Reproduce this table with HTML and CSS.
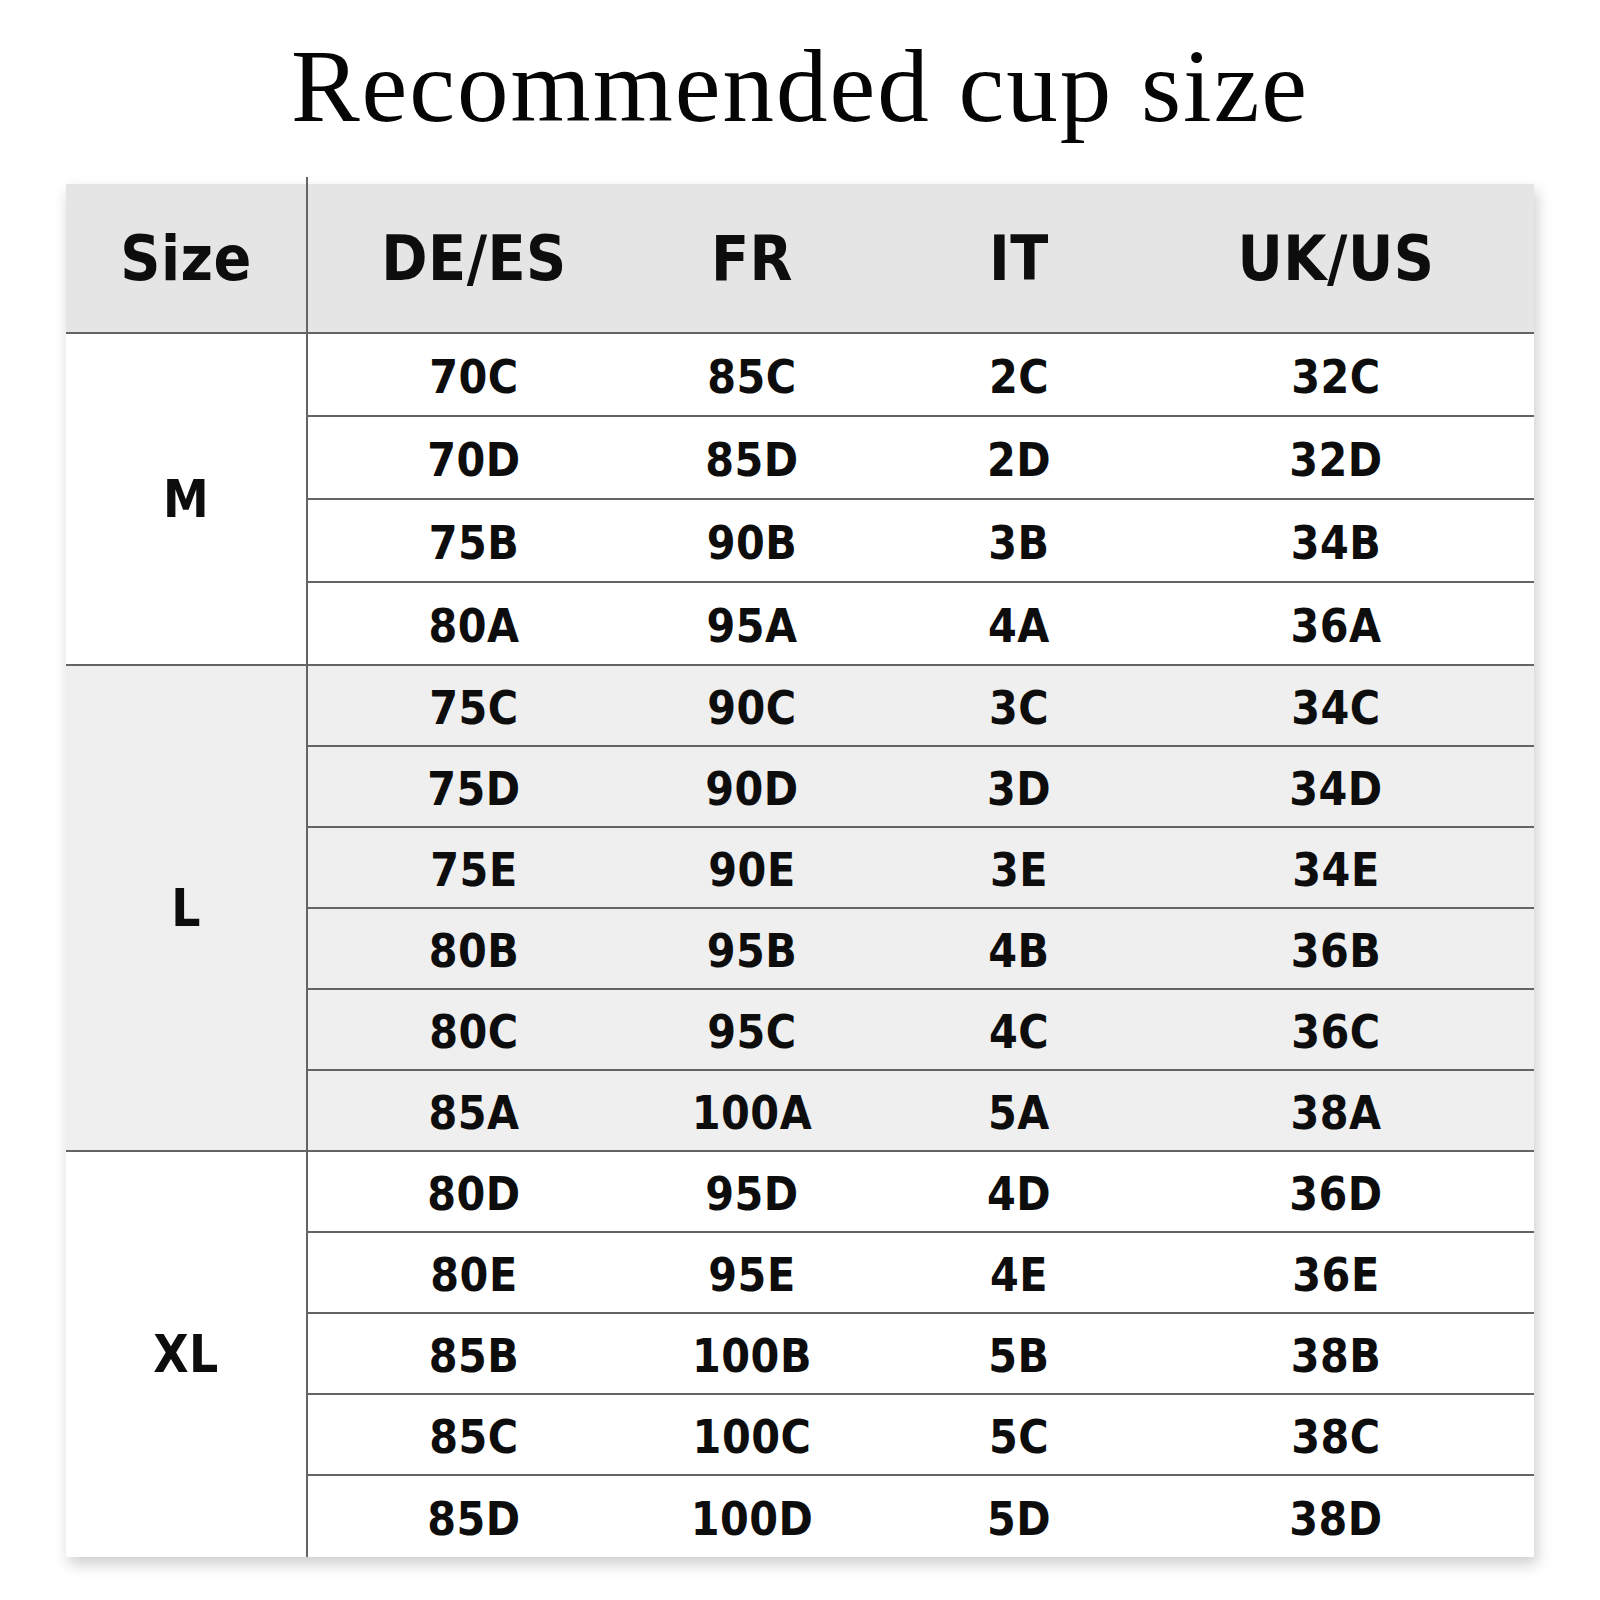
FILE: index.html
```html
<!DOCTYPE html>
<html>
<head>
<meta charset="utf-8">
<link rel="stylesheet" href="styles.css">
</head>
<body>
<h1 class="title">Recommended cup size</h1>
<div class="chart">
  <div class="head">
    <div class="size-cell">Size</div>
    <div class="row-cells">
      <div class="c c1">DE/ES</div>
      <div class="c c2">FR</div>
      <div class="c c3">IT</div>
      <div class="c c4">UK/US</div>
    </div>
  </div>

  <div class="group tall">
    <div class="size-cell label">M</div>
    <div class="rows">
      <div class="row"><div class="c c1">70C</div><div class="c c2">85C</div><div class="c c3">2C</div><div class="c c4">32C</div></div>
      <div class="row"><div class="c c1">70D</div><div class="c c2">85D</div><div class="c c3">2D</div><div class="c c4">32D</div></div>
      <div class="row"><div class="c c1">75B</div><div class="c c2">90B</div><div class="c c3">3B</div><div class="c c4">34B</div></div>
      <div class="row"><div class="c c1">80A</div><div class="c c2">95A</div><div class="c c3">4A</div><div class="c c4">36A</div></div>
    </div>
  </div>

  <div class="group shaded">
    <div class="size-cell label">L</div>
    <div class="rows">
      <div class="row"><div class="c c1">75C</div><div class="c c2">90C</div><div class="c c3">3C</div><div class="c c4">34C</div></div>
      <div class="row"><div class="c c1">75D</div><div class="c c2">90D</div><div class="c c3">3D</div><div class="c c4">34D</div></div>
      <div class="row"><div class="c c1">75E</div><div class="c c2">90E</div><div class="c c3">3E</div><div class="c c4">34E</div></div>
      <div class="row"><div class="c c1">80B</div><div class="c c2">95B</div><div class="c c3">4B</div><div class="c c4">36B</div></div>
      <div class="row"><div class="c c1">80C</div><div class="c c2">95C</div><div class="c c3">4C</div><div class="c c4">36C</div></div>
      <div class="row"><div class="c c1">85A</div><div class="c c2">100A</div><div class="c c3">5A</div><div class="c c4">38A</div></div>
    </div>
  </div>

  <div class="group last">
    <div class="size-cell label">XL</div>
    <div class="rows">
      <div class="row"><div class="c c1">80D</div><div class="c c2">95D</div><div class="c c3">4D</div><div class="c c4">36D</div></div>
      <div class="row"><div class="c c1">80E</div><div class="c c2">95E</div><div class="c c3">4E</div><div class="c c4">36E</div></div>
      <div class="row"><div class="c c1">85B</div><div class="c c2">100B</div><div class="c c3">5B</div><div class="c c4">38B</div></div>
      <div class="row"><div class="c c1">85C</div><div class="c c2">100C</div><div class="c c3">5C</div><div class="c c4">38C</div></div>
      <div class="row"><div class="c c1">85D</div><div class="c c2">100D</div><div class="c c3">5D</div><div class="c c4">38D</div></div>
    </div>
  </div>
</div>
</body>
</html>
```

FILE: styles.css
```css
html, body {
  margin: 0;
  padding: 0;
  background: #ffffff;
}

body {
  width: 1600px;
  min-height: 1600px;
  font-family: "DejaVu Sans Condensed", "Liberation Sans", sans-serif;
  color: #0d0d0d;
}

.title {
  margin: 35px 0 0 0;
  height: 103px;
  font-family: "Liberation Serif", "DejaVu Serif", serif;
  font-weight: normal;
  font-size: 103px;
  line-height: 103px;
  letter-spacing: 2px;
  text-align: center;
  color: #050505;
}

.chart {
  position: relative;
  margin: 46px 0 0 66px;
  width: 1468px;
  background: #ffffff;
  box-shadow: 3px 7px 14px rgba(0, 0, 0, 0.2);
}

.head {
  display: flex;
  height: 150px;
  background: #e5e5e5;
  border-bottom: 2px solid #646464;
  box-sizing: border-box;
  font-weight: bold;
  font-size: 62px;
  letter-spacing: 0.5px;
}

.size-cell {
  position: relative;
  width: 242px;
  flex: none;
  box-sizing: border-box;
  border-right: 2px solid #646464;
  display: flex;
  align-items: center;
  justify-content: center;
}

.head .size-cell::before {
  content: "";
  position: absolute;
  right: -2px;
  top: -7px;
  width: 2px;
  height: 7px;
  background: #646464;
}

.row-cells,
.row {
  display: flex;
  align-items: center;
}

.row-cells {
  flex: 1;
}

.c {
  text-align: center;
  box-sizing: border-box;
}

.c1 { width: 332px; }
.c2 { width: 224px; }
.c3 { width: 310px; }
.c4 { width: 360px; padding-right: 36px; }

.group {
  display: flex;
  border-bottom: 2px solid #646464;
}

.group.last {
  border-bottom: none;
}

.group.shaded {
  background: #efefef;
}

.label {
  font-weight: bold;
  font-size: 51px;
  letter-spacing: 0.5px;
}

.rows {
  display: flex;
  flex-direction: column;
  flex: 1;
}

.row {
  flex: none;
  height: 81px;
  box-sizing: border-box;
  border-bottom: 2px solid #646464;
  font-weight: bold;
  font-size: 46px;
  letter-spacing: 0.5px;
  padding-top: 4px;
}

.group.tall .row {
  height: 83px;
}

.row:last-child {
  border-bottom: none;
  height: 79px;
}

.group.tall .row:last-child {
  height: 81px;
}

.group.last .row:last-child {
  height: 81px;
}
```
